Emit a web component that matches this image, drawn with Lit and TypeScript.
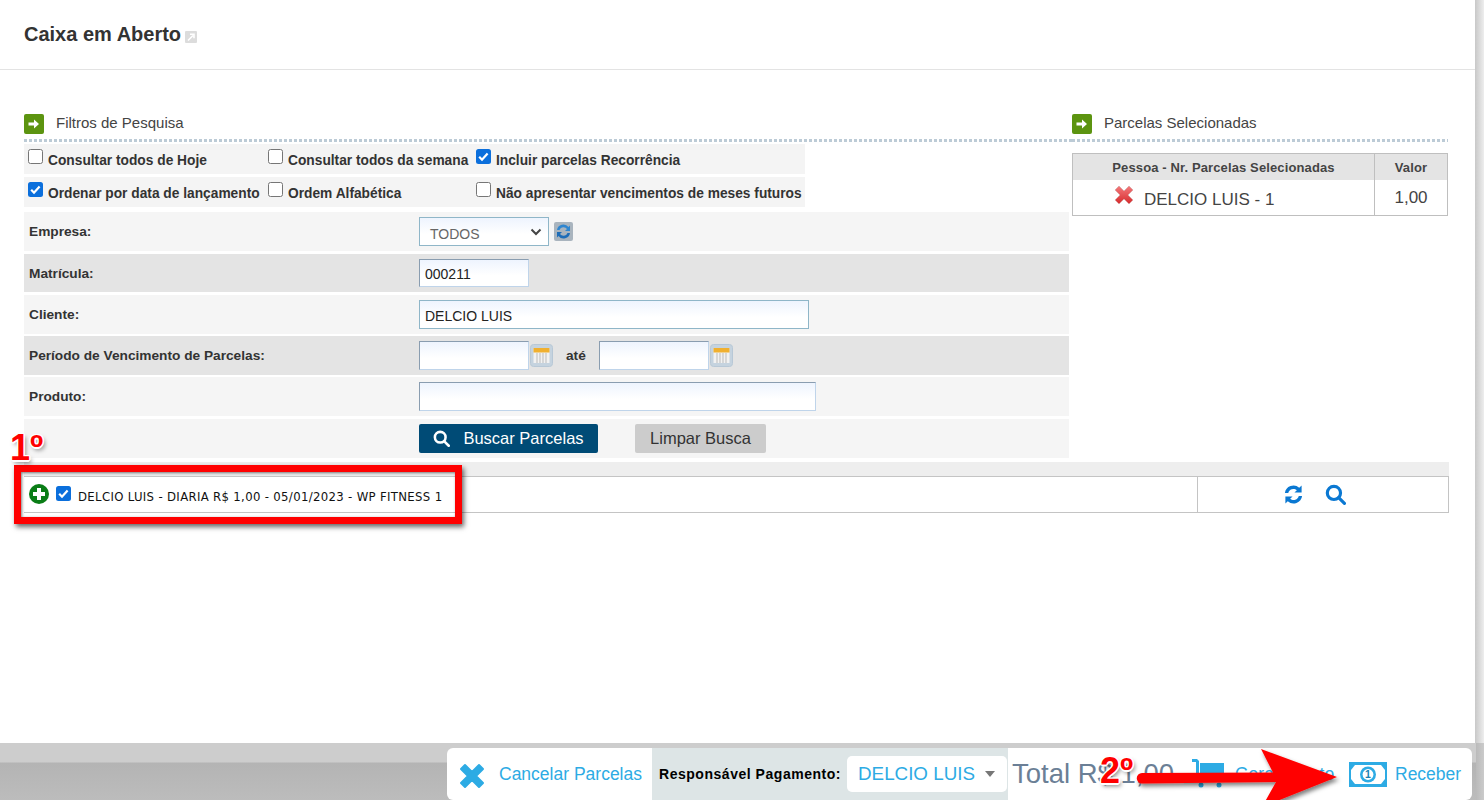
import { LitElement, html, css } from "lit";
import { customElement } from "lit/decorators.js";

const arrowIcon = html`<svg class="ga" viewBox="0 0 20 20"><rect width="20" height="20" rx="2" fill="#5c9410"/><path d="M4.5 8.5h5.500V5.500l5 4.500-5 4.500v-3H4.500z" fill="#fff"/></svg>`;
const search = (c: string, s: number) => html`<svg width=${s} height=${s} viewBox="0 0 20 20" fill="none" stroke=${c} stroke-width="3"><circle cx="8.500" cy="8.500" r="6.300"/><path d="M13 13l5.500 5.500" stroke-linecap="round"/></svg>`;
const cal = html`<svg class="cal" width="23" height="23" viewBox="0 0 23 23"><rect x=".5" y=".5" width="22" height="22" rx="3" fill="#c5d3df" stroke="#b8c8d6"/><rect x="3.500" y="4" width="16" height="15" fill="#f2f2f2"/><rect x="3.500" y="4" width="16" height="4.500" fill="#f0b030"/><path d="M7 9v10M10 9v10M13 9v10M16 9v10" stroke="#bbb"/></svg>`;

const check = (on: boolean) => on
  ? html`<span class="cb on"><svg viewBox="0 0 15 15"><path d="M3.200 7.800l2.800 2.900 5.600-6.200" fill="none" stroke="#fff" stroke-width="2.200"/></svg></span>`
  : html`<span class="cb"></span>`;

@customElement("app-root")
export class AppRoot extends LitElement {
  static styles = css`
    :host { display: block; position: relative; width: 1484px; height: 800px; overflow: hidden; background: #ccc; font-family: "Liberation Sans", Arial, sans-serif; color: #333; }
    .page { width: 1475px; height: 743px; background: #fff; box-sizing: border-box; }
    .side { position: absolute; left: 1475px; top: 0; width: 9px; height: 743px; background: linear-gradient(90deg, #c8c8c8, #eeeeee); }
    .shade { position: absolute; left: 0; top: 743px; width: 1484px; height: 57px; background: linear-gradient(#cdcdcd 0, #cdcdcd 19px, #b4b4b4 20px, #bcbcbc 100%); }
    .shade2 { position: absolute; left: 1476px; top: 743px; width: 8px; height: 57px; background: linear-gradient(90deg, #bababa, #cbcbcb); }
    header { height: 69px; border-bottom: 1px solid #e3e3e3; display: flex; align-items: center; padding-left: 24px; gap: 4px; }
    h1 { margin: -2px 0 0; font-size: 20px; font-weight: bold; color: #333; line-height: 1; }
    .ext { margin-top: 4px; }
    .body { display: flex; padding: 44px 0 0 24px; }
    .left { width: 1045px; margin-right: 3px; }
    .right { width: 376px; }
    .sec { display: flex; align-items: center; height: 20px; font-size: 15px; line-height: 18px; color: #444; gap: 12px; }
    .sec span { margin-top: -2px; }
    .ga { width: 20px; height: 20px; }
    .dots { height: 3px; margin-top: 5px; background-image: linear-gradient(90deg, #bccbd6 3px, transparent 3px); background-size: 5px 3px; }
    .left .dots { margin-right: -3px; }
    .checks { width: 781px; margin-top: 2px; display: flex; flex-direction: column; gap: 3px; }
    .crow { height: 30px; background: #f4f4f4; display: grid; grid-template-columns: 240px 208px auto; padding-left: 4px; align-items: start; }
    .citem { display: flex; font-size: 13.75px; font-weight: bold; color: #333; padding-top: 5px; gap: 5px; line-height: 24px; height: 25px; white-space: nowrap; }
    .cb { flex: none; width: 13px; height: 13px; border: 1px solid #767676; border-radius: 2.5px; background: #fff; display: block; }
    .cb.on { width: 15px; height: 15px; border: 0; background: #0b6fdc; }
    .cb svg { display: block; width: 15px; height: 15px; }
    .form { margin-top: 5px; display: flex; flex-direction: column; }
    .frow { display: grid; grid-template-columns: 390px 1fr; align-items: center; height: 39px; padding-left: 5px; font-size: 13.7px; font-weight: bold; color: #333; margin-bottom: 3px; background: #f5f5f5; }
    .frow.d { background: #e4e4e4; }
    .frow.short { height: 38px; }
    .frow.tight { margin-bottom: 2px; }
    .ctl { display: flex; align-items: center; }
    .inp { box-sizing: border-box; width: 110px; height: 29px; border: 1px solid #8fb3c6; border-top-color: #8a9db0; border-left-color: #8a9db0; border-right-color: #bfd4ea; border-bottom-color: #bfd4ea; background: linear-gradient(#eef4fe, #fff 60%); font-size: 14px; font-weight: normal; color: #222; padding: 1px 5px 0; line-height: 27px; }
    .inp.sm { height: 28px; line-height: 26px; }
    .inp.teal { border-color: #8fb6c8; width: 390px; padding-top: 2px; }
    .inp.wide { width: 397px; }
    .sel { box-sizing: border-box; width: 130px; height: 29px; border: 1px solid #8fb6c8; background: linear-gradient(#eef4fe, #fff 60%); font-size: 14px; font-weight: normal; color: #666; display: flex; align-items: center; justify-content: space-between; padding: 4px 6px 0 10px; }
    .sel svg { margin-top: -4px; }
    .refresh { margin-left: 5px; }
    .cal { margin-left: 1px; }
    .ate { margin: 0 13px 0 13px; color: #333; }
    .btn { box-sizing: border-box; height: 29px; border-radius: 2px; font-size: 16.5px; font-weight: normal; display: flex; align-items: center; justify-content: center; }
    .btn.p { width: 179px; background: #004b76; color: #fff; gap: 13px; }
    .btn.g { width: 131px; background: #ccc; color: #333; margin-left: 37px; }
    .band { position: absolute; left: 24px; top: 462px; width: 1425px; height: 14px; background: #eee; }
    .row { position: absolute; left: 24px; top: 476px; width: 1425px; height: 37px; box-sizing: border-box; border-top: 1px solid #c4c4c4; border-right: 1px solid #c4c4c4; border-bottom: 1px solid #c4c4c4; display: grid; grid-template-columns: 1173px 1fr; }
    .rl { display: flex; align-items: center; padding-left: 5px; gap: 7px; color: #111; white-space: nowrap; }
    .rl .plus { margin-top: -2px; }
    .rl .cb { margin-bottom: 3px; }
    .rl .t { font-family: "DejaVu Sans Condensed", "DejaVu Sans", sans-serif; font-size: 13px; letter-spacing: .33px; margin-top: 4px; }
    .rr { border-left: 1px solid #c4c4c4; display: flex; justify-content: center; gap: 21px; align-items: center; padding-right: 17px; }
    table { border-collapse: collapse; width: 376px; margin-top: 11px; }
    th { background: #e4e4e4; font-size: 13px; color: #444; height: 26px; padding: 0; border: 1px solid #bfbfbf; border-bottom: 0; letter-spacing: .12px; }
    td { height: 35px; padding: 0; border: 1px solid #bfbfbf; border-top: 0; font-size: 17px; color: #444; text-align: center; }
    th + th, td + td { width: 72px; }
    .cell { display: flex; align-items: center; padding-left: 40px; gap: 9px; }
    .cell svg { margin-top: -6px; }
    .cell span { margin-top: 5px; }
    .bar { position: absolute; left: 447px; top: 748px; width: 1025px; height: 52px; background: #fff; border-radius: 6px; display: flex; box-sizing: border-box; align-items: center; font-size: 17.5px; color: #2dabe4; white-space: nowrap; }
    .cancel { display: flex; align-items: center; padding-left: 12px; gap: 14px; width: 205px; box-sizing: border-box; height: 100%; }
    .cancel svg { margin-top: 3px; }
    .resp { width: 356px; height: 100%; background: #dde5e6; display: flex; align-items: center; font-size: 14px; font-weight: bold; color: #000; box-sizing: border-box; padding-left: 7px; gap: 6px; letter-spacing: .53px; }
    .pick { width: 160px; height: 36px; background: #fff; border-radius: 5px; font-size: 18.8px; font-weight: normal; color: #2dabe4; display: flex; align-items: center; box-sizing: border-box; padding-left: 11px; letter-spacing: 0; position: relative; }
    .caret { position: absolute; right: 12px; top: 15px; width: 0; height: 0; border: 5px solid transparent; border-top: 6px solid #777; border-bottom: 0; }
    .total { font-size: 27.5px; color: #6b7f96; margin-left: 4px; width: 180px; }
    .gen { display: flex; align-items: center; gap: 9px; width: 157px; }
    .rec { display: flex; align-items: center; gap: 8px; }
    .ann { position: absolute; left: 0; top: 0; pointer-events: none; }
    .redbox { position: absolute; left: 14px; top: 465px; width: 448px; height: 59px; box-sizing: border-box; border: 7px solid #f00; box-shadow: 2px 3px 5px rgba(0,0,0,.6), inset 1px 1px 3px rgba(0,0,0,.5); }
    .arrow { position: absolute; left: 1130px; top: 745px; overflow: visible; }
    .mark { position: absolute; font-weight: bold; font-size: 36px; line-height: 1; color: #f00; text-shadow: -1px -1px 0 #fff, 1px -1px 0 #fff, -1px 1px 0 #fff, 1px 1px 0 #fff, 0 1.500px 0 #fff, 1.500px 0 0 #fff, -1.500px 0 0 #fff, 0 -1.500px 0 #fff, 2px 3px 4px rgba(0,0,0,.5); }
    .mark.a { left: 10px; top: 430px; }
    .mark.b { left: 1100px; top: 753px; }
  `;

  render() {
    return html`
      <div class="shade"></div>
      <div class="shade2"></div>
      <div class="side"></div>
      <div class="page">
        <header>
          <h1>Caixa em Aberto</h1>
          <svg class="ext" width="12" height="12" viewBox="0 0 12 12"><rect width="12" height="12" rx="1" fill="#dcdcdc"/><path d="M3 9.500L8 4.500M5 3.200h4v4" fill="none" stroke="#fff" stroke-width="1.600"/></svg>
        </header>
        <div class="body">
          <div class="left">
            <div class="sec">${arrowIcon}<span>Filtros de Pesquisa</span></div>
            <div class="dots"></div>
            <div class="checks">
              <div class="crow">
                <div class="citem">${check(false)}Consultar todos de Hoje</div>
                <div class="citem">${check(false)}Consultar todos da semana</div>
                <div class="citem">${check(true)}Incluir parcelas Recorrência</div>
              </div>
              <div class="crow">
                <div class="citem">${check(true)}Ordenar por data de lançamento</div>
                <div class="citem">${check(false)}Ordem Alfabética</div>
                <div class="citem">${check(false)}Não apresentar vencimentos de meses futuros</div>
              </div>
            </div>
            <div class="form">
              <div class="frow"><span>Empresa:</span>
                <div class="ctl"><div class="sel">TODOS<svg width="12" height="8" viewBox="0 0 12 8"><path d="M1.500 1.500L6 6l4.500-4.500" fill="none" stroke="#444" stroke-width="2"/></svg></div>
                  <svg class="refresh" width="19" height="19" viewBox="0 0 19 19"><rect width="19" height="19" rx="2" fill="#a9b4be"/><path d="M3 8a6.500 6.500 0 0 1 11.500-3l1.500-1.500V9h-5l2-2A4.300 4.300 0 0 0 5.500 8z" fill="#2f86d0"/><path d="M16 11a6.500 6.500 0 0 1-11.500 3L3 15.500V10h5l-2 2a4.300 4.300 0 0 0 7.500-1z" fill="#1e6db8"/></svg></div></div>
              <div class="frow d short"><span>Matrícula:</span><div class="ctl"><div class="inp sm">000211</div></div></div>
              <div class="frow tight"><span>Cliente:</span><div class="ctl"><div class="inp teal">DELCIO LUIS</div></div></div>
              <div class="frow d tight"><span>Período de Vencimento de Parcelas:</span>
                <div class="ctl"><div class="inp"></div>${cal}<span class="ate">até</span><div class="inp"></div>${cal}</div></div>
              <div class="frow"><span>Produto:</span><div class="ctl"><div class="inp wide"></div></div></div>
              <div class="frow"><span></span><div class="ctl"><div class="btn p">${search("#fff", 17)}<span>Buscar Parcelas</span></div><div class="btn g">Limpar Busca</div></div></div>
            </div>
          </div>
          <div class="right">
            <div class="sec">${arrowIcon}<span>Parcelas Selecionadas</span></div>
            <div class="dots"></div>
            <table>
              <tr><th>Pessoa - Nr. Parcelas Selecionadas</th><th>Valor</th></tr>
              <tr><td><div class="cell"><svg width="22" height="22" viewBox="0 0 22 22"><defs><linearGradient id="rx" x1="0" y1="0" x2="0" y2="1"><stop offset="0" stop-color="#f47a7c"/><stop offset="1" stop-color="#d62a2c"/></linearGradient></defs><path d="M2 6l4-4 5 5 5-5 4 4-5 5 5 5-4 4-5-5-5 5-4-4 5-5z" fill="url(#rx)" stroke="#d9a5a5" stroke-width=".8" stroke-linejoin="round"/></svg><span>DELCIO LUIS - 1</span></div></td><td>1,00</td></tr>
            </table>
          </div>
        </div>
      </div>
      <div class="band"></div>
      <div class="row">
        <div class="rl">
          <svg class="plus" width="20" height="20" viewBox="0 0 20 20"><circle cx="10" cy="10" r="10" fill="#0a7d16"/><path d="M8 4h4v4h4v4h-4v4H8v-4H4V8h4z" fill="#fff"/></svg>
          ${check(true)}<span class="t">DELCIO LUIS - DIARIA R$ 1,00 - 05/01/2023 - WP FITNESS 1</span>
        </div>
        <div class="rr">
          <svg width="21" height="21" viewBox="0 0 22 22"><path d="M2 9.500A9 9 0 0 1 17 4l2.500-2.500V9h-7.500l2.500-2.500A5.500 5.500 0 0 0 5.500 9.500z" fill="#0a78d2"/><path d="M20 12.500A9 9 0 0 1 5 18l-2.500 2.500V13h7.500L7.500 15.500A5.500 5.500 0 0 0 16.500 12.500z" fill="#0a78d2"/></svg>
          ${search("#0a78d2", 21)}
        </div>
      </div>
      <div class="bar">
        <div class="cancel"><svg width="26" height="26" viewBox="0 0 26 26"><path d="M6 2l7 7 7-7 4 4-7 7 7 7-4 4-7-7-7 7-4-4 7-7-7-7z" fill="#2dabe4" stroke="#2dabe4" stroke-linejoin="round" stroke-width="2"/></svg><span>Cancelar Parcelas</span></div>
        <div class="resp"><span>Responsável Pagamento:</span><div class="pick">DELCIO LUIS<i class="caret"></i></div></div>
        <div class="total">Total R$ 1,00</div>
        <div class="gen"><svg width="34" height="30" viewBox="0 0 34 30"><path d="M0 0h5l2 2v16h24v3H4V3H0z" fill="#2dabe4"/><path d="M8 4h24v12H8z" fill="#2dabe4"/><circle cx="9" cy="26" r="2.500" fill="#2dabe4"/><circle cx="27" cy="26" r="2.500" fill="#2dabe4"/></svg><span>Gerar Boleto</span></div>
        <div class="rec"><svg width="38" height="25" viewBox="0 0 38 25"><rect width="38" height="25" fill="#2dabe4"/><path d="M6 3h26l4 5v9l-4 5H6l-4-5V8z" fill="#fff"/><circle cx="19" cy="12.500" r="8" fill="#2dabe4"/><circle cx="19" cy="12.500" r="5.400" fill="#fff"/><text x="19" y="16.300" font-family="Liberation Sans" font-weight="bold" font-size="10.500" text-anchor="middle" fill="#1a7fb0">1</text></svg><span>Receber</span></div>
      </div>
      <div class="ann">
        <div class="redbox"></div>
        <svg class="arrow" width="240" height="60" viewBox="0 0 240 60"><defs><filter id="s" x="-5%" y="-20%" width="115%" height="150%"><feDropShadow dx="2" dy="3" stdDeviation="2" flood-color="#000" flood-opacity=".5"/></filter></defs><path d="M12 28l131-.5L131 4l76 28-75 30 14-25-134 1.500a5 5 0 0 1 0-10.500z" fill="#f00" filter="url(#s)"/></svg>
        <div class="mark a">1º</div>
        <div class="mark b">2º</div>
      </div>
    `;
  }
}
